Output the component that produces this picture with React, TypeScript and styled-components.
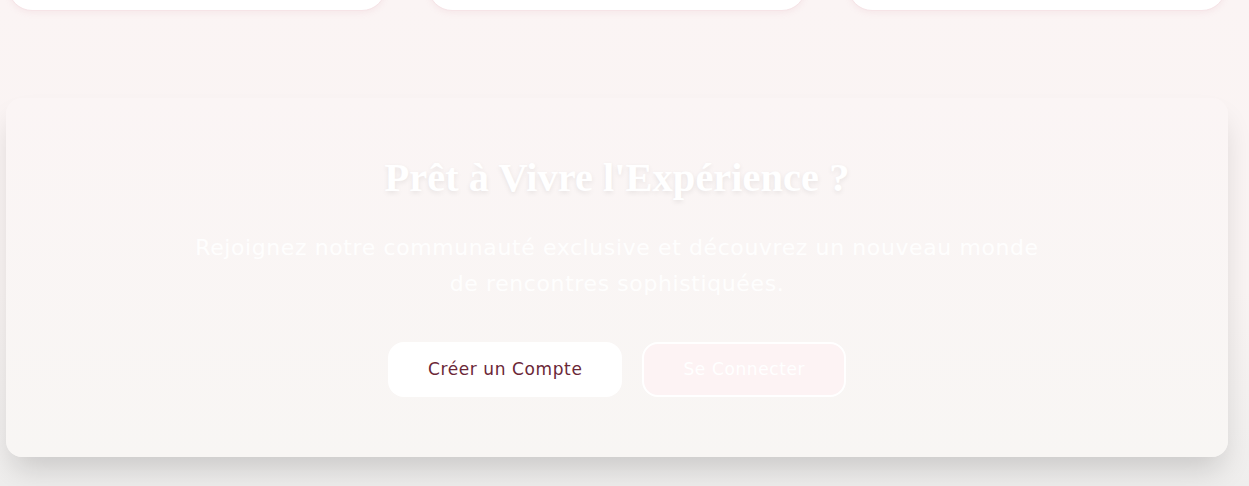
import styled, { createGlobalStyle } from "styled-components";

const GlobalStyle = createGlobalStyle`
  html, body {
    margin: 0;
    padding: 0;
  }
  body {
    background: linear-gradient(180deg, #fbf4f4 0%, #f9f4f3 60%, #efeeed 100%);
    min-height: 486px;
    overflow: hidden;
    font-family: "DejaVu Sans", sans-serif;
  }
`;

const Page = styled.main`
  padding: 0 21px 0 6px;
  height: 486px;
`;

const FeatureGrid = styled.div`
  display: grid;
  grid-template-columns: repeat(3, 1fr);
  gap: 42px;
  margin: -200px 2px 0;
`;

const FeatureCard = styled.div`
  height: 209px;
  background: #ffffff;
  border-radius: 24px;
  border: 1px solid #f6e4e7;
  box-shadow: 0 2px 6px rgba(214, 150, 165, 0.12);
`;

const CtaCard = styled.section`
  margin-top: 87px;
  border-radius: 16px;
  background: linear-gradient(180deg, #fbf5f5 0%, #f8f6f4 100%);
  box-shadow: 0 18px 30px -6px rgba(0, 0, 0, 0.16);
  padding: 56px 40px 60px;
  display: flex;
  flex-direction: column;
  align-items: center;
  text-align: center;
`;

const Title = styled.h2`
  margin: 0;
  font-family: "Liberation Serif", serif;
  font-weight: 700;
  font-size: 40.5px;
  line-height: 1.2;
  color: #ffffff;
  text-shadow: 0 2px 5px rgba(0, 0, 0, 0.08);
`;

const Subtitle = styled.p`
  margin: 27px 0 0;
  max-width: 860px;
  font-family: "DejaVu Sans", sans-serif;
  font-size: 22px;
  letter-spacing: 0.6px;
  line-height: 36px;
  color: rgba(255, 255, 255, 0.92);
`;

const Actions = styled.div`
  display: flex;
  gap: 20px;
  margin-top: 40px;
`;

const Button = styled.button<{ $variant?: "solid" | "outline" }>`
  box-sizing: border-box;
  height: 55px;
  padding: 0 ${(p) => (p.$variant === "outline" ? "39px" : "38px")};
  border-radius: 16px;
  font-family: "DejaVu Sans", sans-serif;
  font-size: 17px;
  letter-spacing: 0.6px;
  cursor: pointer;
  border: 2px solid ${(p) => (p.$variant === "outline" ? "#ffffff" : "transparent")};
  background: ${(p) => (p.$variant === "outline" ? "#fdf3f4" : "#ffffff")};
  color: ${(p) => (p.$variant === "outline" ? "#ffffff" : "#6b2737")};
`;

function App() {
  return (
    <>
      <GlobalStyle />
      <Page>
        <FeatureGrid>
          <FeatureCard />
          <FeatureCard />
          <FeatureCard />
        </FeatureGrid>
        <CtaCard>
          <Title>Prêt à Vivre l'Expérience ?</Title>
          <Subtitle>
            Rejoignez notre communauté exclusive et découvrez un nouveau monde
            de rencontres sophistiquées.
          </Subtitle>
          <Actions>
            <Button>Créer un Compte</Button>
            <Button $variant="outline">Se Connecter</Button>
          </Actions>
        </CtaCard>
      </Page>
    </>
  );
}

export default App;
